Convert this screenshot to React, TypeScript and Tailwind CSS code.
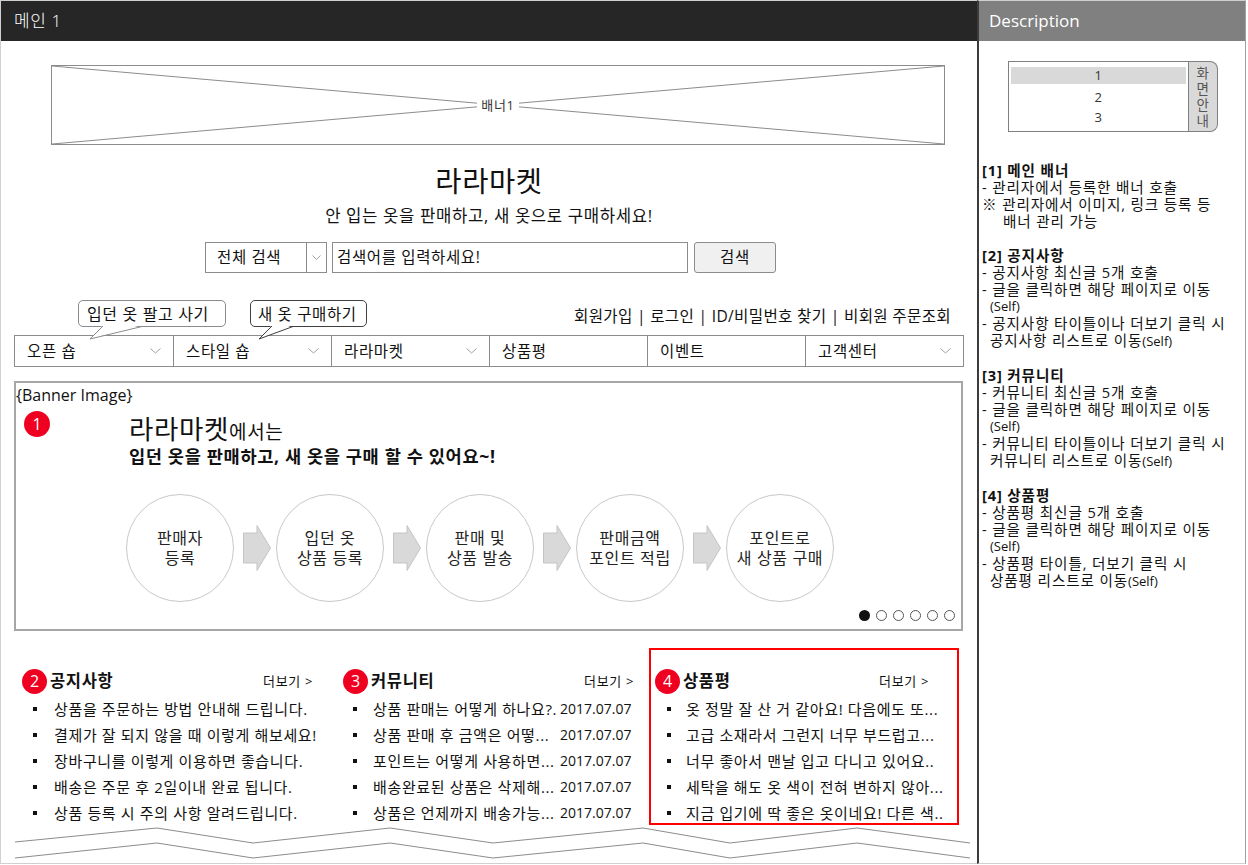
import React from "react";

const Chevron = () => (
  <svg width="11" height="6" viewBox="0 0 11 6" className="shrink-0">
    <polyline points="0.5,0.5 5.5,5 10.5,0.5" fill="none" stroke="#a0a0a0" strokeWidth="1" />
  </svg>
);

const Badge = ({ n, size = "w-[25px] h-[25px]" }: { n: string; size?: string }) => (
  <div className={`${size} shrink-0 rounded-full bg-[#f00020] text-white text-[16px] leading-none flex items-center justify-center tracking-normal`}>
    {n}
  </div>
);

const Arrow = () => (
  <svg width="28" height="46" viewBox="0 0 28 46" className="shrink-0">
    <polygon points="0.5,8 14,8 14,0.5 27.5,23 14,45.5 14,38 0.5,38" fill="#d9d9d9" stroke="#c4c4c4" strokeWidth="1" />
  </svg>
);

const Circle = ({ a, b }: { a: string; b: string }) => (
  <div className="w-[108px] h-[108px] shrink-0 rounded-full border border-[#c8c8c8] flex flex-col items-center justify-center text-[16px] leading-[20px] text-[#222]">
    <span>{a}</span>
    <span>{b}</span>
  </div>
);

const navItems: [string, boolean][] = [
  ["오픈 숍", true],
  ["스타일 숍", true],
  ["라라마켓", true],
  ["상품평", false],
  ["이벤트", false],
  ["고객센터", true],
];

const notices = [
  "상품을 주문하는 방법 안내해 드립니다.",
  "결제가 잘 되지 않을 때 이렇게 해보세요!",
  "장바구니를 이렇게 이용하면 좋습니다.",
  "배송은 주문 후 2일이내 완료 됩니다.",
  "상품 등록 시 주의 사항 알려드립니다.",
];

const community = [
  "상품 판매는 어떻게 하나요?.",
  "상품 판매 후 금액은 어떻...",
  "포인트는 어떻게 사용하면...",
  "배송완료된 상품은 삭제해...",
  "상품은 언제까지 배송가능...",
];

const reviews = [
  "옷 정말 잘 산 거 같아요! 다음에도 또...",
  "고급 소재라서 그런지 너무 부드럽고...",
  "너무 좋아서 맨날 입고 다니고 있어요..",
  "세탁을 해도 옷 색이 전혀 변하지 않아...",
  "지금 입기에 딱 좋은 옷이네요! 다른 색..",
];

const Bullet = () => <span className="w-[4px] h-[4px] bg-[#111] shrink-0" />;

const SectionHead = ({ n, title }: { n: string; title: string }) => (
  <div className="h-[26px] flex items-center">
    <Badge n={n} />
    <span className="ml-[3px] text-[16.5px] leading-[24px] font-bold text-[#111]">{title}</span>
  </div>
);

export default function App() {
  return (
    <div className="w-[1248px] h-[865px] flex bg-white text-[#111] font-['Open_Sans','Noto_Sans_CJK_KR',sans-serif] tracking-[0.04em] overflow-hidden">
      <main className="w-[977px] h-[864px] shrink-0 flex flex-col border-l border-t border-b border-[#d0d0d0]">
        <div className="h-[40px] shrink-0 bg-[#262626] text-white text-[17px] font-light pl-[13px] flex items-center">
          메인 1
        </div>

        {/* banner 1 */}
        <div className="ml-[50px] mt-[24px] w-[894px] h-[80px] shrink-0 border border-[#8c8c8c] relative flex items-center justify-center">
          <svg className="absolute inset-0 w-full h-full" preserveAspectRatio="none" viewBox="0 0 892 78">
            <line x1="0" y1="0" x2="892" y2="78" stroke="#8c8c8c" strokeWidth="1" vectorEffect="non-scaling-stroke" />
            <line x1="0" y1="78" x2="892" y2="0" stroke="#8c8c8c" strokeWidth="1" vectorEffect="non-scaling-stroke" />
          </svg>
          <span className="relative bg-white px-[4px] text-[13px] leading-[16px] text-[#333]">배너1</span>
        </div>

        <div className="mt-[18px] h-[36px] leading-[36px] text-center text-[28.5px] text-[#111]">라라마켓</div>
        <div className="mt-[6px] h-[22px] leading-[22px] text-center text-[16.7px] text-[#111]">
          안 입는 옷을 판매하고, 새 옷으로 구매하세요!
        </div>

        {/* search */}
        <div className="mt-[15px] ml-[204px] h-[31px] flex shrink-0">
          <div className="w-[122px] h-full border border-[#8c8c8c] flex">
            <div className="w-[100px] pl-[11px] flex items-center text-[15.5px]">전체 검색</div>
            <div className="flex-1 border-l border-[#8c8c8c] flex items-center justify-center">
              <svg width="9" height="5" viewBox="0 0 9 5">
                <polyline points="0.5,0.5 4.5,4.5 8.5,0.5" fill="none" stroke="#a0a0a0" strokeWidth="1" />
              </svg>
            </div>
          </div>
          <div className="ml-[5px] w-[356px] h-full border border-[#8c8c8c] pl-[4px] flex items-center text-[15.5px]">
            검색어를 입력하세요!
          </div>
          <div className="ml-[6px] w-[82px] h-full border border-[#8c8c8c] rounded-[3px] bg-[#f0f0f0] flex items-center justify-center text-[15.5px]">
            검색
          </div>
        </div>

        {/* callouts + links */}
        <div className="h-[62px] shrink-0 flex items-end pb-[8px] relative z-10">
          <div className="ml-[77px] w-[148px] h-[27px] border border-[#8c8c8c] rounded-[5px] bg-white flex items-center pl-[8px] text-[16px] leading-[22px] relative whitespace-nowrap">
            입던 옷 팔고 사기
            <svg className="absolute left-[-1px] top-[24px]" width="70" height="16" viewBox="0 0 70 16">
              <polygon points="25,0 12,14 64,0" fill="#fff" />
              <polyline points="25,1 12,14 64,1.5" fill="none" stroke="#8c8c8c" strokeWidth="1" />
            </svg>
          </div>
          <div className="ml-[24px] w-[117px] h-[27px] border border-[#404040] rounded-[5px] bg-white flex items-center pl-[7px] text-[15.5px] leading-[22px] relative whitespace-nowrap">
            새 옷 구매하기
            <svg className="absolute left-[-1px] top-[24px]" width="50" height="16" viewBox="0 0 50 16">
              <polygon points="22,0 9,14 43,0" fill="#fff" />
              <polyline points="22,1 9,14 43,1.5" fill="none" stroke="#404040" strokeWidth="1" />
            </svg>
          </div>
          <div className="ml-auto mr-[26px] h-[22px] leading-[22px] text-[15.6px] tracking-[0.02em] whitespace-nowrap">
            회원가입 | 로그인 | ID/비밀번호 찾기 | 비회원 주문조회
          </div>
        </div>

        {/* nav */}
        <div className="ml-[13px] w-[950px] h-[32px] shrink-0 border border-[#8c8c8c] grid grid-cols-6">
          {navItems.map(([label, chev], i) => (
            <div
              key={label}
              className={`flex items-center justify-between pl-[12px] pr-[12px] text-[15.5px] leading-[22px] ${i > 0 ? "border-l border-[#8c8c8c]" : ""}`}
            >
              <span>{label}</span>
              {chev && <Chevron />}
            </div>
          ))}
        </div>

        {/* banner image */}
        <div className="ml-[13px] mt-[14px] w-[949px] h-[250px] shrink-0 border-2 border-[#a6a6a6] flex flex-col">
          <div className="mt-[2px] h-[20px] leading-[20px] text-[16px] tracking-normal text-[#111]">{"{Banner Image}"}</div>
          <div className="flex h-[70px]">
            <div className="ml-[8px] mt-[6px]">
              <Badge n="1" size="w-[26px] h-[26px]" />
            </div>
            <div className="ml-[79px] mt-[9px] flex flex-col">
              <div className="h-[32px] flex items-baseline text-[#111]">
                <span className="text-[26.5px] leading-[30px]">라라마켓</span>
                <span className="text-[19px] leading-[30px]">에서는</span>
              </div>
              <div className="h-[20px] leading-[20px] text-[17.6px] font-bold whitespace-nowrap">입던 옷을 판매하고, 새 옷을 구매 할 수 있어요~!</div>
            </div>
          </div>
          <div className="ml-[110px] mt-[19px] flex items-center">
            <Circle a="판매자" b="등록" />
            <div className="ml-[9px] mr-[5px]"><Arrow /></div>
            <Circle a="입던 옷" b="상품 등록" />
            <div className="ml-[9px] mr-[5px]"><Arrow /></div>
            <Circle a="판매 및" b="상품 발송" />
            <div className="ml-[9px] mr-[5px]"><Arrow /></div>
            <Circle a="판매금액" b="포인트 적립" />
            <div className="ml-[9px] mr-[5px]"><Arrow /></div>
            <Circle a="포인트로" b="새 상품 구매" />
          </div>
          <div className="mt-auto mb-[8px] mr-[6px] flex justify-end gap-[6px]">
            <span className="w-[11px] h-[11px] rounded-full bg-[#111]" />
            {[0, 1, 2, 3, 4].map((i) => (
              <span key={i} className="w-[11px] h-[11px] rounded-full border border-[#555] bg-white" />
            ))}
          </div>
        </div>

        {/* sections */}
        <div className="mt-[17px] h-[177px] shrink-0 flex items-start">
          <div className="ml-[21px] w-[292px] pt-[20px]">
            <div className="flex items-center justify-between">
              <SectionHead n="2" title="공지사항" />
              <span className="text-[13px] leading-[18px] mr-[1px]">더보기 &gt;</span>
            </div>
            <ul className="mt-[2px]">
              {notices.map((t) => (
                <li key={t} className="h-[26px] flex items-center text-[15px] leading-[22px] pl-[11px]">
                  <Bullet />
                  <span className="ml-[17px] whitespace-nowrap">{t}</span>
                </li>
              ))}
            </ul>
          </div>

          <div className="ml-[29px] w-[292px] pt-[20px]">
            <div className="flex items-center justify-between">
              <SectionHead n="3" title="커뮤니티" />
              <span className="text-[13px] leading-[18px] mr-[1px]">더보기 &gt;</span>
            </div>
            <ul className="mt-[2px]">
              {community.map((t) => (
                <li key={t} className="h-[26px] flex items-center text-[15px] leading-[22px] pl-[10px]">
                  <Bullet />
                  <span className="ml-[16px] w-[187px] shrink-0 whitespace-nowrap">{t}</span>
                  <span className="tracking-normal text-[14px] whitespace-nowrap">2017.07.07</span>
                </li>
              ))}
            </ul>
          </div>

          <div className="ml-[14px] w-[310px] h-[177px] border-2 border-[#ff0000] pl-[4px] pt-[18px]">
            <div className="flex items-center justify-between">
              <SectionHead n="4" title="상품평" />
              <span className="text-[13px] leading-[18px] mr-[28px]">더보기 &gt;</span>
            </div>
            <ul className="mt-[2px]">
              {reviews.map((t) => (
                <li key={t} className="h-[26px] flex items-center text-[15px] leading-[22px] pl-[12px]">
                  <Bullet />
                  <span className="ml-[15px] whitespace-nowrap">{t}</span>
                </li>
              ))}
            </ul>
          </div>
        </div>

        <svg width="975" height="37" viewBox="0 0 975 37" className="shrink-0">
          <polyline
            points="14,17 156,3 252,18 389,3 492,18 642,3 729,18 856,3 969,18"
            fill="none"
            stroke="#8c8c8c"
            strokeWidth="1"
          />
          <polyline
            points="14,33 156,18 252,33 389,18 492,33 642,18 729,33 856,18 969,33"
            fill="none"
            stroke="#8c8c8c"
            strokeWidth="1"
          />
        </svg>
      </main>

      <aside className="w-[269px] h-[864px] shrink-0 border-l-2 border-l-[#3c3c3c] border-r border-r-[#a0a0a0] border-t border-t-[#d0d0d0] border-b border-b-[#d0d0d0] flex flex-col">
        <div className="h-[40px] shrink-0 bg-[#808080] text-white text-[17px] pl-[10px] flex items-center tracking-normal">
          Description
        </div>
        <div className="ml-[29px] mt-[20px] h-[71px] flex shrink-0">
          <div className="w-[181px] h-full border border-[#808080] px-[2px] pt-[5px] text-[13px] text-[#333]">
            <div className="h-[17px] leading-[17px] bg-[#d9d9d9] text-center">1</div>
            <div className="mt-[3px] h-[20px] leading-[20px] text-center">2</div>
            <div className="h-[20px] leading-[20px] text-center">3</div>
          </div>
          <div className="w-[29px] h-full border border-l-0 border-[#808080] rounded-r-[8px] bg-[#d9d9d9] flex flex-col items-center justify-center text-[13.5px] leading-[16px] text-[#555]">
            <span>화</span>
            <span>면</span>
            <span>안</span>
            <span>내</span>
          </div>
        </div>
        <div className="mt-[30px] pl-[3px] text-[14.6px] tracking-[0.06em] leading-[17px] text-[#111] whitespace-nowrap">
          <div className="font-bold">[1] 메인 배너</div>
          <div>- 관리자에서 등록한 배너 호출</div>
          <div>※ 관리자에서 이미지, 링크 등록 등</div>
          <div className="pl-[21px]">배너 관리 가능</div>
          <div className="h-[17px]" />
          <div className="font-bold">[2] 공지사항</div>
          <div>- 공지사항 최신글 5개 호출</div>
          <div>- 글을 클릭하면 해당 페이지로 이동</div>
          <div className="pl-[8px] text-[13px] tracking-normal">(Self)</div>
          <div>- 공지사항 타이틀이나 더보기 클릭 시</div>
          <div className="pl-[8px]">공지사항 리스트로 이동<span className="text-[13px] tracking-normal">(Self)</span></div>
          <div className="h-[17px]" />
          <div className="font-bold">[3] 커뮤니티</div>
          <div>- 커뮤니티 최신글 5개 호출</div>
          <div>- 글을 클릭하면 해당 페이지로 이동</div>
          <div className="pl-[8px] text-[13px] tracking-normal">(Self)</div>
          <div>- 커뮤니티 타이틀이나 더보기 클릭 시</div>
          <div className="pl-[8px]">커뮤니티 리스트로 이동<span className="text-[13px] tracking-normal">(Self)</span></div>
          <div className="h-[17px]" />
          <div className="font-bold">[4] 상품평</div>
          <div>- 상품평 최신글 5개 호출</div>
          <div>- 글을 클릭하면 해당 페이지로 이동</div>
          <div className="pl-[8px] text-[13px] tracking-normal">(Self)</div>
          <div>- 상품평 타이틀, 더보기 클릭 시</div>
          <div className="pl-[8px]">상품평 리스트로 이동<span className="text-[13px] tracking-normal">(Self)</span></div>
        </div>
      </aside>
    </div>
  );
}
